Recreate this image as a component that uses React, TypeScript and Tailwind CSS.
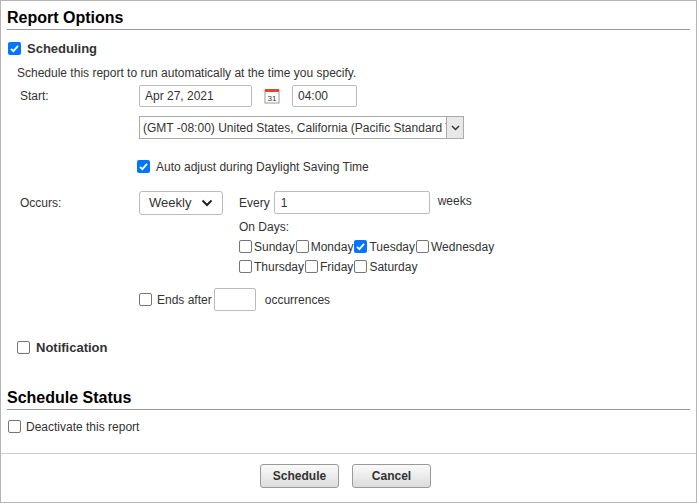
import React from "react";

const Box = ({ checked = false }: { checked?: boolean }) =>
  checked ? (
    <span className="inline-flex w-[13px] h-[13px] shrink-0 rounded-[2px] bg-[#0075ff] items-center justify-center">
      <svg width="11" height="11" viewBox="0 0 11 11"><path d="M2 5.8 L4.4 8.2 L9 2.8" stroke="white" strokeWidth="1.8" fill="none" /></svg>
    </span>
  ) : (
    <span className="inline-block w-[13px] h-[13px] shrink-0 rounded-[2px] border border-[#767676] bg-white" />
  );

const Day = ({ label, checked = false }: { label: string; checked?: boolean }) => (
  <span className="inline-flex items-center gap-[2px] mr-[1px]"><Box checked={checked} /><span>{label}</span></span>
);

export default function App() {
  return (
    <div className="w-[697px] h-[503px] border border-[#b5b5b5] bg-white text-[12px] text-[#333] relative overflow-hidden" style={{ fontFamily: "Arial, 'Liberation Sans', sans-serif" }}>
      <div className="px-[6px] pt-[7px]">
        <div className="text-[16px] font-bold text-black leading-[20px] border-b border-[#999] pb-[1px]">Report Options</div>
        <div className="flex items-center gap-[6px] mt-[11px] ml-[1px] h-[15px]"><Box checked /><span className="text-[13px] font-bold">Scheduling</span></div>
        <div className="mt-[10px] ml-[10px] leading-[14px]">Schedule this report to run automatically at the time you specify.</div>
        <div className="flex mt-[5px]">
          <div className="w-[132px] pl-[13px] pt-[2px]">Start:</div>
          <div>
            <div className="flex items-center h-[22px]">
              <div className="w-[113px] h-[22px] border border-[#bbb] rounded-[2px] pl-[5px] flex items-center">Apr 27, 2021</div>
              <div className="w-[40px] flex justify-center">
                <svg width="16" height="16" viewBox="0 0 16 16"><rect x="1" y="2" width="14" height="13" fill="#fff" stroke="#999" /><rect x="1" y="1" width="14" height="3" fill="#e0472e" /><text x="8" y="13" fontSize="8" textAnchor="middle" fill="#333" fontFamily="Arial">31</text></svg>
              </div>
              <div className="w-[65px] h-[22px] border border-[#bbb] rounded-[2px] pl-[5px] flex items-center">04:00</div>
            </div>
            <div className="mt-[9px] w-[325px] h-[23px] border border-[#aaa] flex">
              <div className="flex-1 flex items-center pl-[3px] whitespace-nowrap overflow-hidden">(GMT -08:00) United States, California (Pacific Standard Time)</div>
              <div className="w-[17px] border-l border-[#aaa] bg-[#e8e8e8] flex items-center justify-center">
                <svg width="9" height="6" viewBox="0 0 9 6"><path d="M1 1 L4.5 4.5 L8 1" stroke="#333" strokeWidth="1.5" fill="none" /></svg>
              </div>
            </div>
            <div className="flex items-center gap-[6px] mt-[20px] -ml-[2px] h-[15px]"><Box checked /><span>Auto adjust during Daylight Saving Time</span></div>
          </div>
        </div>
        <div className="flex mt-[17px]">
          <div className="w-[132px] pl-[13px] pt-[3px]">Occurs:</div>
          <div>
            <div className="flex">
              <div className="w-[84px] h-[24px] border border-[#bbb] rounded-[3px] flex items-center justify-between px-[9px] text-[13px]">
                <span>Weekly</span>
                <svg width="12" height="8" viewBox="0 0 12 8"><path d="M1.5 1.5 L6 6 L10.5 1.5" stroke="#222" strokeWidth="2" fill="none" /></svg>
              </div>
              <div className="ml-[16px]">
                <div className="flex items-center h-[23px]">
                  <span>Every</span>
                  <div className="ml-[4px] w-[156px] h-[23px] border border-[#bbb] rounded-[2px] pl-[6px] flex items-center">1</div>
                  <span className="ml-[8px] -mt-[3px]">weeks</span>
                </div>
                <div className="mt-[6px] leading-[14px]">On Days:</div>
                <div className="mt-[5px] flex items-center h-[15px]"><Day label="Sunday" /><Day label="Monday" /><Day label="Tuesday" checked /><Day label="Wednesday" /></div>
                <div className="mt-[5px] flex items-center h-[15px]"><Day label="Thursday" /><Day label="Friday" /><Day label="Saturday" /></div>
              </div>
            </div>
            <div className="flex items-center mt-[14px] h-[23px]">
              <Box /><span className="ml-[5px]">Ends after</span>
              <div className="ml-[2px] w-[42px] h-[23px] border border-[#bbb] rounded-[2px]" />
              <span className="ml-[9px]">occurrences</span>
            </div>
          </div>
        </div>
        <div className="flex items-center gap-[6px] mt-[29px] ml-[10px] h-[15px]"><Box /><span className="text-[13px] font-bold">Notification</span></div>
        <div className="mt-[33px] text-[16px] font-bold text-black leading-[20px] border-b border-[#999] pb-[1px]">Schedule Status</div>
        <div className="flex items-center gap-[5px] mt-[9px] ml-[1px] h-[15px]"><Box /><span>Deactivate this report</span></div>
      </div>
      <div className="mt-[19px] border-t border-[#ccc] flex gap-[13px] pt-[10px] pl-[259px]">
        <button className="w-[79px] h-[24px] border border-[#999] rounded-[3px] bg-gradient-to-b from-[#fafafa] to-[#dcdcdc] text-[12px] font-bold text-[#333]">Schedule</button>
        <button className="w-[79px] h-[24px] border border-[#999] rounded-[3px] bg-gradient-to-b from-[#fafafa] to-[#dcdcdc] text-[12px] font-bold text-[#333]">Cancel</button>
      </div>
    </div>
  );
}
